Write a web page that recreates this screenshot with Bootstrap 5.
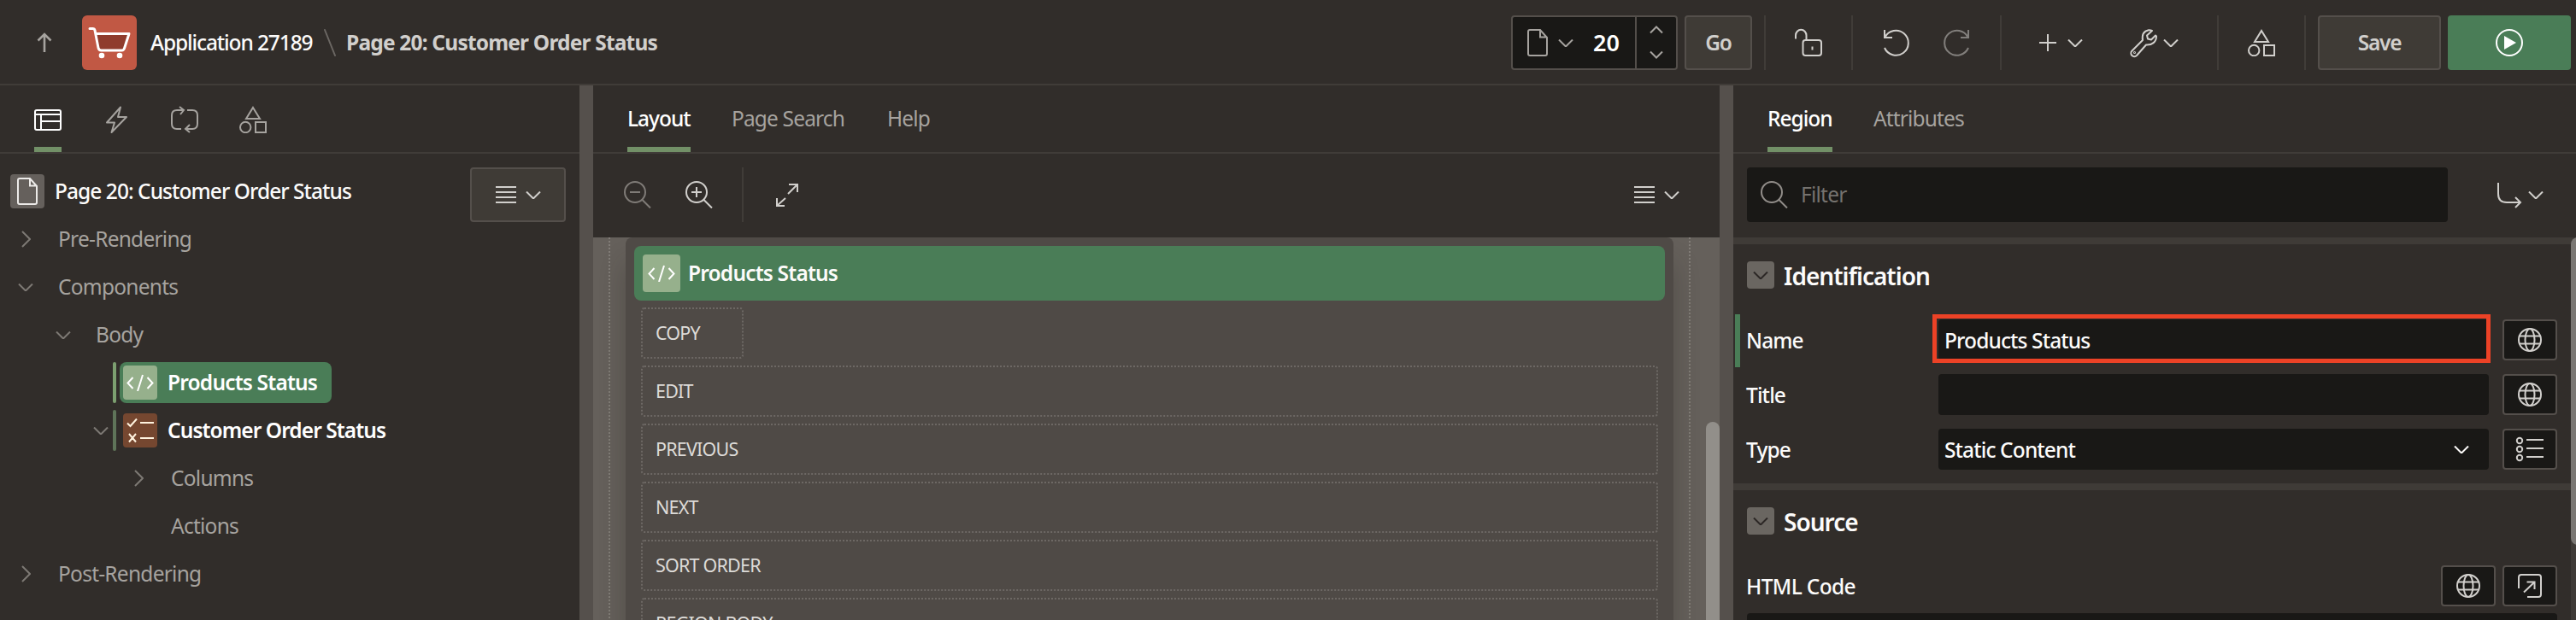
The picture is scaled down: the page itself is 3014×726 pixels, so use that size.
<!DOCTYPE html>
<html lang="en">
<head>
<meta charset="utf-8">
<title>Page Designer</title>
<link rel="stylesheet" href="https://cdn.jsdelivr.net/npm/bootstrap@5.3.0/dist/css/bootstrap.min.css">
<style>
:root{--bg:#312d2a;--line:#403c38;--split:#55504c;--field:#191816;--edge:#544f4b;--green:#4a7d57;--accent:#729067;--txt:#fcfbfa;--mid:#d1cfcc;--dim:#a6a39f}
body{width:3014px;height:726px;overflow:hidden;background:var(--bg);color:var(--txt);font-family:"Noto Sans","Open Sans",sans-serif;font-size:24.5px;line-height:32px;letter-spacing:-.75px}
svg{display:block;flex:none;fill:none;stroke:currentColor;stroke-width:2;overflow:visible}
.i32{width:32px;height:32px}.i28{width:28px;height:28px}.doc{width:24px;height:32px}.chev{width:18px;height:9px}.menu-i{width:24px;height:20px}
span,h2,a{white-space:nowrap}
.topbar{height:100px;border-bottom:2px solid var(--line);padding:4px 6px 2px 36px}
.app-icon{width:64px;height:64px;margin:0 16px 0 28px}
.app-name{width:203px;letter-spacing:-1.12px;font-weight:500}
.page-name{margin-left:12px;font-weight:700;color:var(--mid);letter-spacing:-.81px}
.sep{width:2px;height:64px;background:var(--line);flex:none}
.btn{--bs-btn-padding-x:0;--bs-btn-padding-y:0;--bs-btn-font-size:24.5px;--bs-btn-border-radius:4px;--bs-btn-border-width:2px;--bs-btn-line-height:1;display:flex;align-items:center;justify-content:center;flex:none;letter-spacing:inherit}
.btn-tool{--bs-btn-color:var(--mid);--bs-btn-border-width:0;height:64px}
.btn-solid{--bs-btn-color:var(--mid);--bs-btn-bg:#3f3b36;--bs-btn-border-color:var(--edge);--bs-btn-font-weight:600;height:64px;letter-spacing:-1.3px}
.btn-run{--bs-btn-color:#fff;--bs-btn-bg:var(--green);--bs-btn-border-width:0;width:144px;height:64px}
.page-picker{width:195px;height:64px;border:2px solid var(--edge);border-radius:4px;background:var(--field);color:var(--dim);flex:none}
.page-no{font-size:27px;font-weight:600;width:33px;margin:0 15px 0 23px;color:#fff;letter-spacing:0}
.stepper{width:48px;border-left:2px solid var(--edge);padding:11px 0 12px}
.w79{width:79px}.w70{width:70px}.w109{width:109px}.w100{width:100px}.w144{width:144px}
.workspace{display:grid;grid-template-columns:678px 16px 1318px 16px 986px;height:626px}
.splitter{background:var(--split)}
.tabs{height:80px;border-bottom:2px solid var(--line);color:var(--dim)}
.tabs>a{height:78px;border-bottom:6px solid transparent;padding-top:6px;color:var(--dim);text-decoration:none}
.tabs>a.active{border-color:var(--accent);color:#fff;font-weight:500;letter-spacing:-1px}
.tabs>a.ico{width:32px;padding-top:24px}
.tree-menu{width:112px}
.tnode{height:56px;color:var(--dim)}
.tnode .tw{width:20px;margin-right:28px;color:#7d7974;display:flex;justify-content:center}
.l0{padding-left:20px}.l1{padding-left:64px}.l2{padding-left:108px}.l3{padding-left:152px}
.tnode b{font-weight:600;color:#fff}
.ticon{width:40px;height:40px;border-radius:4px;display:flex;align-items:center;justify-content:center;flex:none}
.tmark{width:4px;height:48px;border-radius:2px;flex:none}
.tsel{height:48px;border-radius:8px;background:var(--green);padding:0 16px 0 4px;width:248px}
.lt{background:#96b08c;color:#fff}.brown{background:#754730;color:#fff3df}.grey{background:#65605c;color:#eceae8}
.center-tools{height:98px;color:var(--mid);padding:0 47px 2px 36px}
.canvas{height:448px;background:#65605b;padding:0 34px 0 18px;overflow:hidden;position:relative}
.frame{border:dotted #827d78;border-width:0 2px;padding:0 18px}
.panel{background:#4f4a46;border-radius:8px 8px 0 0;height:470px;padding:10px;box-shadow:0 30px 30px rgba(40,35,30,.3)}
.panel-head{height:64px;border-radius:8px;background:var(--green);padding-left:10px;font-weight:600;letter-spacing:-.82px}
.panel-head .ticon{width:44px;height:44px;margin-right:9px}
.slot{height:60px;margin:8px 8px 0;border:2px dotted #6d6864;border-radius:4px;padding:0 16px 0 15px;font-size:21.5px;letter-spacing:-.8px;color:#dddbd8;display:flex;align-items:center}
.slot-copy{width:120px}
.thumb{position:absolute;right:0;top:216px;width:16px;height:300px;border-radius:8px;background:#928f8a}
.filter-row{height:98px;padding:16px 0 0 16px}
.filter-box{width:820px;height:64px;border-radius:4px;background:var(--field);padding-left:16px;color:#75726e;flex:none}
.props{position:relative;height:448px;font-weight:500;letter-spacing:-.88px}
.band{height:8px;background:#3f3b37}
.sect{height:82px;padding:20px 0 0 16px}
.fold{width:32px;height:32px;border-radius:4px;background:#6a6661;color:#2b2725;display:flex;align-items:center;justify-content:center}
.sect h2{font-size:28px;font-weight:600;margin:0 0 0 11px;line-height:34px;letter-spacing:-.98px}
.prop{height:64px;padding:6px 0 0 16px;display:flex}
.prop>span{width:224px;line-height:49px;text-indent:-1px}
.inp{width:644px;height:48px;border-radius:4px;background:var(--field);padding:1px 23px 0 7px;margin-right:16px;position:relative}
.inp.marked::after{content:"";position:absolute;inset:-6px -2px -3px -7px;border:5px solid #ec4226}
.btn-field{--bs-btn-color:var(--mid);--bs-btn-bg:var(--field);--bs-btn-border-color:var(--edge);width:64px;height:48px}
.changed{box-shadow:inset 2px 0 var(--bg),inset 8px 0 var(--green);height:62px;margin-bottom:2px}
.code-box{height:40px;width:948px;margin-left:16px;border-radius:4px;background:var(--field)}
.pscroll{position:absolute;right:0;top:0;width:6px;height:448px;background:#3f3b37;overflow:hidden}
.pscroll i{display:block;width:16px;height:360px;border-radius:8px;background:#7a7773}
</style>
</head>
<body>
<svg class="d-none">
<defs><pattern id="weave" width="13" height="26" patternUnits="userSpaceOnUse"><path d="M1 2c3-4 5 0 4 8s3 9 4 2 4-7 3 2M0 17c3 5 4 9 6 4s2-8 5-4" stroke="#ad4939" stroke-width="1.2"/></pattern></defs>
<symbol id="dn" viewBox="0 0 18 9"><path d="M1 .5l8 8 8-8"/></symbol>
<symbol id="rt" viewBox="0 0 11 20"><path d="M1 1l9 9-9 9"/></symbol>
<symbol id="docu" viewBox="0 0 24 32"><path d="M3 1h12l8 9v19a2 2 0 0 1-2 2H3a2 2 0 0 1-2-2V3a2 2 0 0 1 2-2zM15 1v8.500h8"/></symbol>
<symbol id="menu" viewBox="0 0 24 20"><path d="M0 1h24M0 7h24M0 13h24M0 19h24"/></symbol>
<symbol id="shapes" viewBox="0 0 32 32"><path d="M16 2l8 13H8zM19 19h12v12H19z"/><circle cx="7.200" cy="25" r="6.200"/></symbol>
<symbol id="code" viewBox="0 0 32 20"><path d="M7.500 4L1.500 10.500l6 6.500M24.500 4l6 6.500-6 6.500M19 1l-6 19"/></symbol>
<symbol id="globe" viewBox="0 0 28 28"><circle cx="14" cy="14" r="13"/><ellipse cx="14" cy="14" rx="5.500" ry="13"/><path d="M2 9.500h24M2 18.500h24"/></symbol>
<symbol id="lens" viewBox="0 0 32 32"><circle cx="13" cy="13" r="12"/><path d="M21.500 22l9.500 9.500"/></symbol>
</svg>

<header class="topbar d-flex align-items-center">
  <svg class="i32" style="color:#a6a39f"><path d="M16 27V6M8.500 13.500L16 6l7.500 7.500" stroke-width="2.600"/></svg>
  <svg class="app-icon" viewBox="0 0 64 64"><rect width="64" height="64" rx="6" fill="#c15844" stroke="none"/><rect width="64" height="64" rx="6" fill="url(#weave)" stroke="none"/><path d="M15 21.500h40L49.500 41H19.500z" fill="#8f3c2d" stroke="none"/><path d="M9 15.500h3.500q2 0 2.500 2l4 20.500q.6 3 3.500 3h24q2.500 0 3.200-3L55 21.500H16" stroke="#fff" stroke-width="3" stroke-linecap="round" stroke-linejoin="round"/><g fill="#fff" stroke="none"><circle cx="23" cy="47" r="3.300"/><circle cx="44" cy="47" r="3.300"/></g></svg>
  <span class="app-name">Application 27189</span>
  <svg width="14" height="34" style="color:#6b6763"><path d="M1 2l12 30" stroke-linecap="round"/></svg>
  <span class="page-name">Page 20: Customer Order Status</span>

  <div class="ms-auto d-flex align-items-center">
    <div class="page-picker d-flex align-items-center me-2">
      <svg class="doc" style="margin:0 12px 0 17px"><use href="#docu"/></svg><svg class="chev"><use href="#dn"/></svg>
      <span class="page-no">20</span>
      <div class="stepper align-self-stretch ms-auto d-flex flex-column justify-content-between align-items-center"><svg width="14" height="8"><path d="M0 7.500l7-7 7 7"/></svg><svg width="14" height="8"><path d="M0 .5l7 7 7-7"/></svg></div>
    </div>
    <button class="btn btn-solid w79">Go</button>
    <div class="sep" style="margin-left:14px"></div>
    <button class="btn btn-tool w100"><svg class="i32"><rect x="9.500" y="13" width="21.500" height="18" rx="3"/><path d="M1 11.500V7.500a6 6.500 0 0 1 12.500 0V13M20.500 20.500v4"/></svg></button>
    <div class="sep"></div>
    <button class="btn btn-tool w70 ms-3"><svg class="i32"><path d="M2 1v9h9M2.500 9.500A14.500 14.500 0 1 1 2 22"/></svg></button>
    <button class="btn btn-tool w70 me-3" style="opacity:.5"><svg class="i32"><path d="M30 1v9h-9M29.500 9.500A14.500 14.500 0 1 0 30 22"/></svg></button>
    <div class="sep"></div>
    <button class="btn btn-tool w109" style="margin-left:15px;gap:13px"><svg width="20" height="20"><path d="M0 10h20M10 0v20"/></svg><svg class="chev"><use href="#dn"/></svg></button>
    <button class="btn btn-tool w109" style="margin-right:19px;gap:7px"><svg class="i32"><path d="M22 1.200C16 2.500 14 7 15 13L2.500 25.500a3.800 3.800 0 0 0 5.500 5.500L19 18.500C26 19 31 15 31 8.500l-1-1-5 5-4-1-1-4 6-5.500q-2-1-4-.8z" stroke-linejoin="round"/><circle cx="5.500" cy="27.500" r=".5"/></svg><svg class="chev"><use href="#dn"/></svg></button>
    <div class="sep"></div>
    <button class="btn btn-tool w100"><svg class="i32"><use href="#shapes"/></svg></button>
    <div class="sep" style="margin-right:14px"></div>
    <button class="btn btn-solid w144 me-2">Save</button>
    <button class="btn btn-run"><svg class="i32"><circle cx="16" cy="16" r="15"/><path d="M10 8l14 8-14 8z" fill="#fff" stroke="none"/></svg></button>
  </div>
</header>

<main class="workspace">
  <section>
    <nav class="tabs d-flex" style="padding-left:40px;gap:48px">
      <a class="ico active"><svg class="i32"><path d="M3 5h26a2 2 0 0 1 2 2v19a2 2 0 0 1-2 2H3a2 2 0 0 1-2-2V7a2 2 0 0 1 2-2zM1 10h30M8 10v18M8 18h23"/></svg></a>
      <a class="ico"><svg class="i32"><path d="M21 1.500L5 19.500h9L10.500 31 28 13H18z" stroke-linejoin="round"/></svg></a>
      <a class="ico"><svg class="i32"><path d="M15 5H7Q1 5 1 11v10q0 6 6 6h5M10 1l5 4-4 5M19 5h6q6 0 6 6v10q0 6-6 6h-8M22 22l-5 5 5 4"/></svg></a>
      <a class="ico"><svg class="i32"><use href="#shapes"/></svg></a>
    </nav>
    <div class="d-flex justify-content-between" style="padding:16px 16px 0 12px;height:72px">
      <div class="d-flex align-items-center" style="height:56px"><span class="ticon grey" style="margin-right:12px"><svg class="doc"><use href="#docu"/></svg></span><span style="font-weight:500;letter-spacing:-.95px">Page 20: Customer Order Status</span></div>
      <button class="btn btn-solid tree-menu" style="gap:11px"><svg class="menu-i"><use href="#menu"/></svg><svg class="chev"><use href="#dn"/></svg></button>
    </div>
    <div class="tnode l0 d-flex align-items-center"><span class="tw"><svg width="11" height="20"><use href="#rt"/></svg></span><span>Pre-Rendering</span></div>
    <div class="tnode l0 d-flex align-items-center"><span class="tw"><svg class="chev"><use href="#dn"/></svg></span><span>Components</span></div>
    <div class="tnode l1 d-flex align-items-center"><span class="tw"><svg class="chev"><use href="#dn"/></svg></span><span>Body</span></div>
    <div class="tnode l2 d-flex align-items-center"><span class="tmark ms-4 me-1" style="background:#7c9f70"></span><div class="tsel d-flex align-items-center"><span class="ticon lt" style="margin-right:12px"><svg width="32" height="20"><use href="#code"/></svg></span><b style="letter-spacing:-.82px">Products Status</b></div></div>
    <div class="tnode l2 d-flex align-items-center"><span class="tw" style="margin-right:4px"><svg class="chev"><use href="#dn"/></svg></span><span class="tmark me-2" style="background:#5f7459"></span><span class="ticon brown" style="margin-right:12px"><svg class="i32"><path d="M1 7.500l3.500 3.500L12 2.500M16 7h16M3 20l8 9.500M11 20l-8 9.500M16 25h16"/></svg></span><b style="letter-spacing:-.94px">Customer Order Status</b></div>
    <div class="tnode l3 d-flex align-items-center"><span class="tw"><svg width="11" height="20"><use href="#rt"/></svg></span><span>Columns</span></div>
    <div class="tnode l3 d-flex align-items-center"><span class="tw"></span><span>Actions</span></div>
    <div class="tnode l0 d-flex align-items-center"><span class="tw"><svg width="11" height="20"><use href="#rt"/></svg></span><span>Post-Rendering</span></div>
  </section>

  <div class="splitter"></div>

  <section>
    <nav class="tabs d-flex align-items-center" style="padding-left:40px;letter-spacing:-.85px">
      <a class="active d-flex align-items-center" style="width:74px;margin-right:48px">Layout</a>
      <a class="d-flex align-items-center" style="width:134px;margin-right:48px">Page Search</a>
      <a class="d-flex align-items-center">Help</a>
    </nav>
    <div class="center-tools d-flex align-items-center">
      <svg class="i32" style="color:#7f7b77;margin-right:40px"><use href="#lens"/><path d="M7 13h12"/></svg>
      <svg class="i32" style="margin-right:34px"><use href="#lens"/><path d="M7 13h12M13 7v12"/></svg>
      <div class="sep"></div>
      <svg class="i28" style="margin-left:37px"><path d="M16 2h10v9M26 2L15 13M12 18L2 27M2 18v9h9"/></svg>
      <div class="ms-auto d-flex align-items-center" style="gap:11px"><svg class="menu-i"><use href="#menu"/></svg><svg class="chev"><use href="#dn"/></svg></div>
    </div>
    <div class="canvas">
      <div class="frame"><div class="panel">
        <div class="panel-head d-flex align-items-center"><span class="ticon lt"><svg width="32" height="20"><use href="#code"/></svg></span><span>Products Status</span></div>
        <div class="slot slot-copy">COPY</div>
        <div class="slot">EDIT</div>
        <div class="slot">PREVIOUS</div>
        <div class="slot">NEXT</div>
        <div class="slot">SORT ORDER</div>
        <div class="slot">REGION BODY</div>
      </div></div>
      <div class="thumb"></div>
    </div>
  </section>

  <div class="splitter"></div>

  <section>
    <nav class="tabs d-flex align-items-center" style="padding-left:40px;letter-spacing:-.85px">
      <a class="active d-flex align-items-center" style="width:76px;margin-right:48px">Region</a>
      <a class="d-flex align-items-center">Attributes</a>
    </nav>
    <div class="filter-row d-flex">
      <div class="filter-box d-flex align-items-center"><svg class="i32" style="margin-right:15px;color:#918d89"><use href="#lens"/></svg><span>Filter</span></div>
      <div class="d-flex align-items-center" style="height:64px;margin-left:58px;gap:8px;color:var(--mid)"><svg class="i28"><path d="M1 0v13q0 10 10 10h15M21 17l6 6-6 6"/></svg><svg class="chev"><use href="#dn"/></svg></div>
    </div>
    <div class="props">
      <div class="band"></div>
      <div class="sect d-flex"><span class="fold"><svg class="chev"><use href="#dn"/></svg></span><h2>Identification</h2></div>
      <div class="prop changed"><span>Name</span><div class="inp marked d-flex align-items-center">Products Status</div><button class="btn btn-field"><svg class="i28"><use href="#globe"/></svg></button></div>
      <div class="prop"><span>Title</span><div class="inp"></div><button class="btn btn-field"><svg class="i28"><use href="#globe"/></svg></button></div>
      <div class="prop"><span>Type</span><div class="inp d-flex align-items-center justify-content-between">Static Content<svg class="chev"><use href="#dn"/></svg></div><button class="btn btn-field"><svg class="i32"><g><circle cx="4" cy="6" r="3.200"/><circle cx="4" cy="16" r="3.200"/><circle cx="4" cy="26" r="3.200"/></g><path d="M12 5h20M12 15h20M12 25h20"/></svg></button></div>
      <div style="height:6px"></div>
      <div class="band"></div>
      <div class="sect d-flex"><span class="fold"><svg class="chev"><use href="#dn"/></svg></span><h2>Source</h2></div>
      <div class="prop" style="height:62px"><span style="letter-spacing:-.65px">HTML Code</span><div class="d-flex gap-2" style="margin-left:588px"><button class="btn btn-field"><svg class="i28"><use href="#globe"/></svg></button><button class="btn btn-field"><svg class="i28"><path d="M1 17V4q0-3 3-3h20q3 0 3 3v20q0 3-3 3H11M7 21.500L19 10M10.500 9.500h9V18"/></svg></button></div></div>
      <div class="code-box"></div>
      <div class="pscroll"><i></i></div>
    </div>
  </section>
</main>
<script src="https://cdn.jsdelivr.net/npm/bootstrap@5.3.0/dist/js/bootstrap.bundle.min.js"></script>
</body>
</html>
